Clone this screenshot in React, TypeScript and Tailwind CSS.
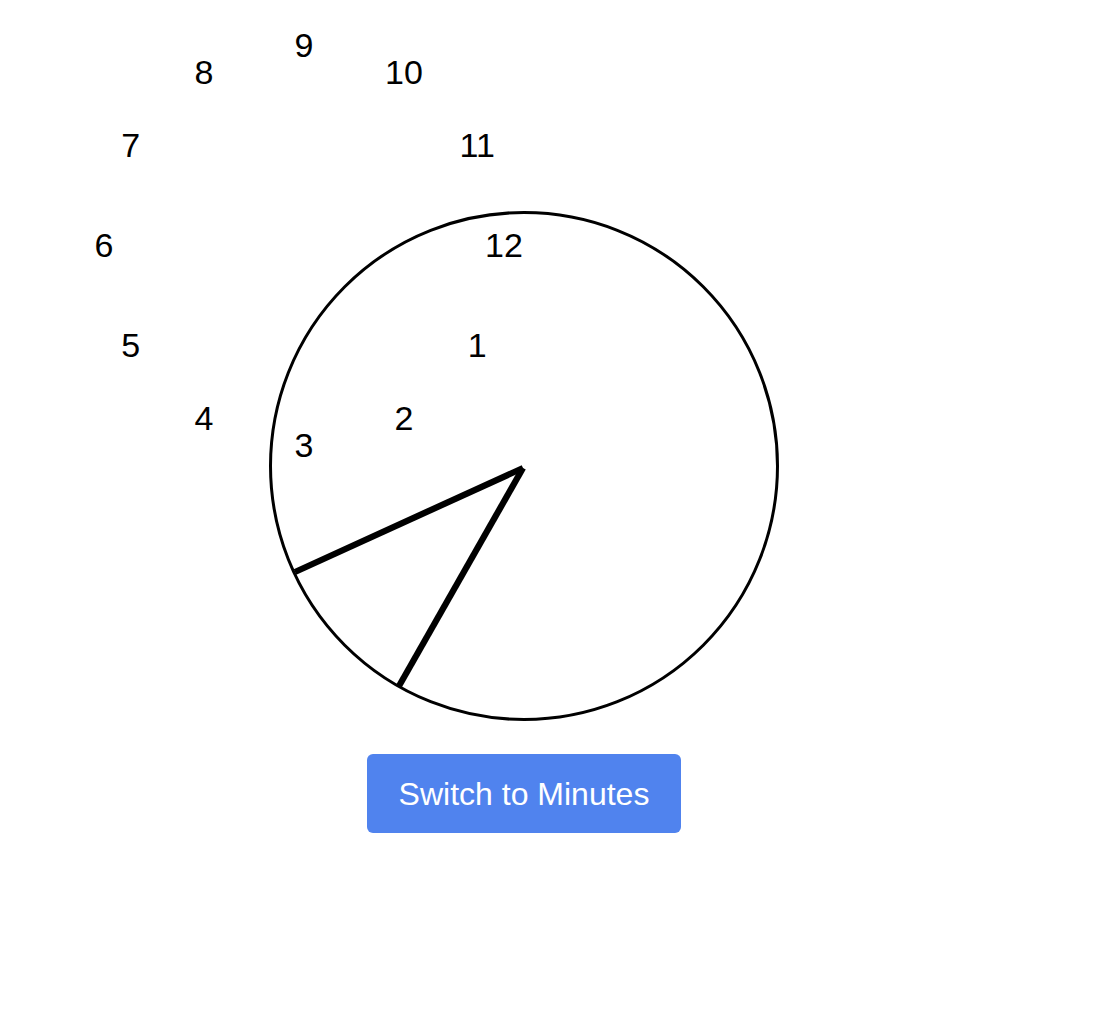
import React from "react";

export default function App() {
  const nums = [12, 1, 2, 3, 4, 5, 6, 7, 8, 9, 10, 11];
  return (
    <div className="min-h-[1016px] w-full bg-white" style={{ fontFamily: '"Liberation Sans", Arial, sans-serif' }}>
      <div className="w-[1048px] pt-[211px] flex flex-col items-center">
        <div className="relative w-[510px] h-[510px] rounded-full border-[3px] border-black">
          <svg className="absolute -left-[3px] -top-[3px] overflow-visible" width="510" height="510">
            <line x1="254" y1="257" x2="26" y2="361" stroke="black" strokeWidth="6.3" />
            <line x1="254" y1="257" x2="130" y2="475" stroke="black" strokeWidth="6.3" />
          </svg>
          {nums.map((n, i) => {
            const a = (i * 30 * Math.PI) / 180;
            const x = 32 + 200 * Math.cos(a);
            const y = 31 + 200 * Math.sin(a);
            return (
              <span
                key={n}
                className="absolute text-[34px] leading-none text-black -translate-x-1/2 -translate-y-1/2 whitespace-nowrap"
                style={{ left: x, top: y }}
              >
                {n}
              </span>
            );
          })}
        </div>
        <button className="mt-[33px] h-[79px] px-[32px] rounded-md bg-[#5083ee] text-white text-[32px] leading-none">
          Switch to Minutes
        </button>
      </div>
    </div>
  );
}
